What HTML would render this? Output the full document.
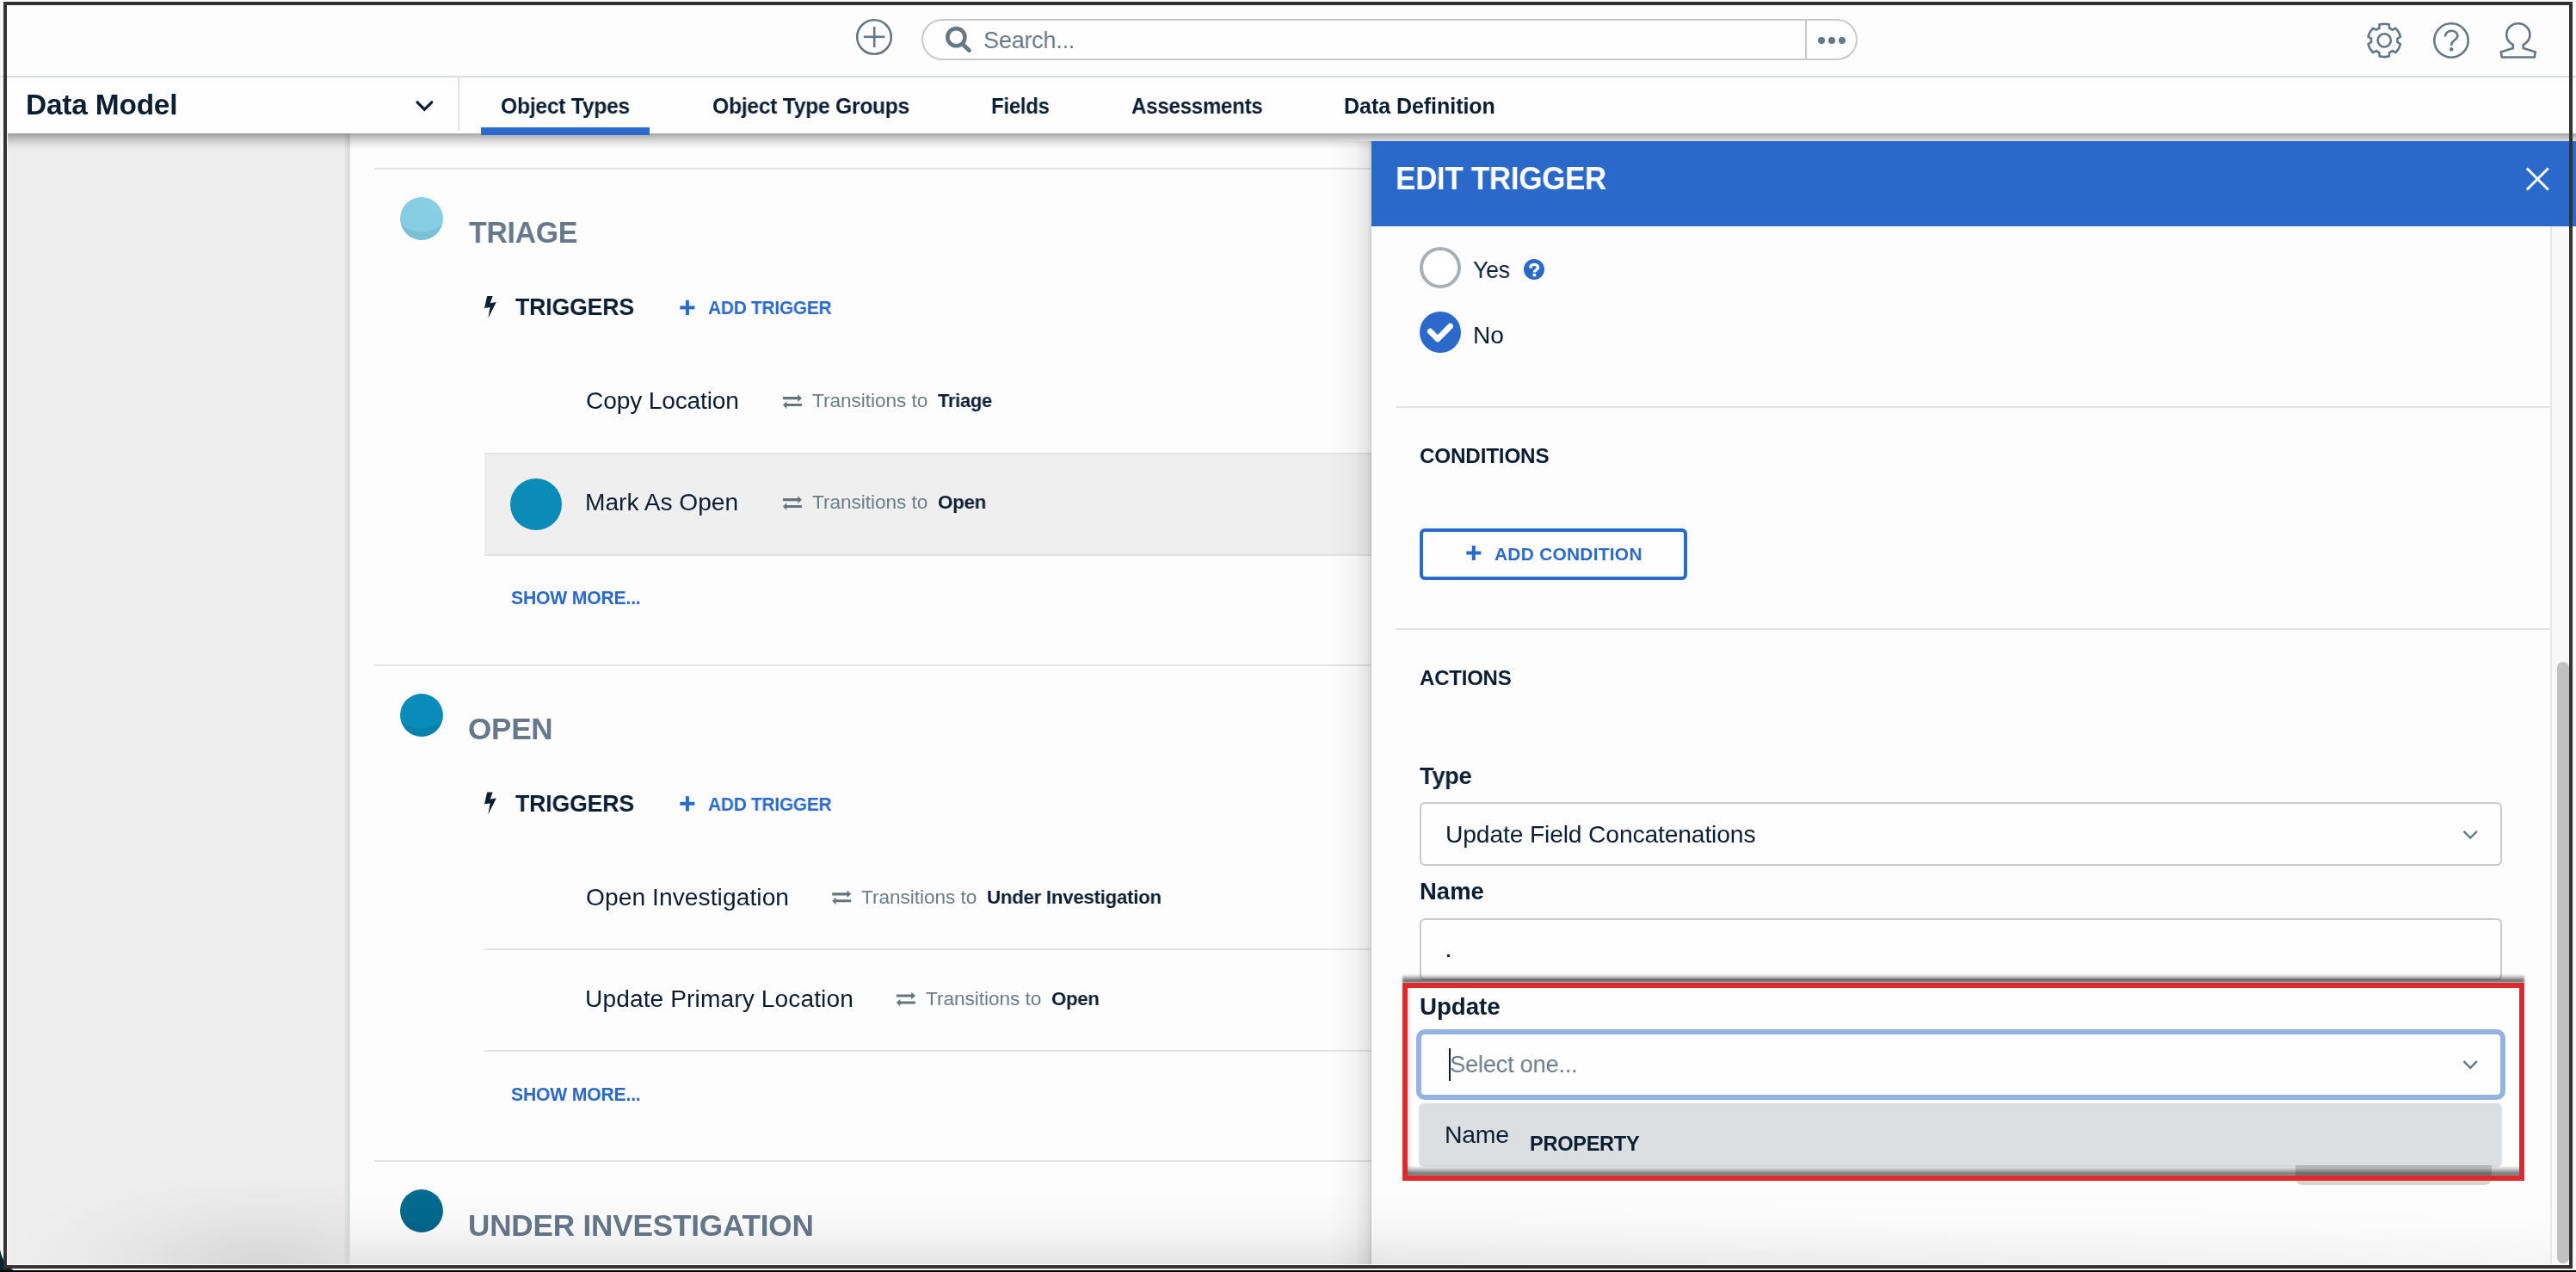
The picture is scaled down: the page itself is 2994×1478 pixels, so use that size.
<!DOCTYPE html>
<html><head><meta charset="utf-8">
<style>
html,body{margin:0;padding:0}
body{width:2994px;height:1478px;overflow:hidden;position:relative;background:#fdfdfd;font-family:"Liberation Sans",sans-serif}
.a{position:absolute;box-sizing:border-box}
.t{position:absolute;white-space:nowrap;line-height:1;font-family:"Liberation Sans",sans-serif;will-change:transform}
svg{position:absolute;overflow:visible}
</style></head>
<body>
<!-- top header -->
<div class="a" style="left:0;top:0;width:2994px;height:88px;background:#fdfdfd"></div>
<div class="a" style="left:0;top:88px;width:2994px;height:2px;background:#d7dde1"></div>
<!-- plus circle -->
<svg style="left:0;top:0" width="2994" height="90">
  <circle cx="1016" cy="43" r="19.8" fill="none" stroke="#667885" stroke-width="2.6"/>
  <line x1="1003.8" y1="42.8" x2="1028.4" y2="42.8" stroke="#667885" stroke-width="2.6"/>
  <line x1="1016.2" y1="31" x2="1016.2" y2="55" stroke="#667885" stroke-width="2.6"/>
</svg>
<!-- search box -->
<div class="a" style="left:1071px;top:22px;width:1088px;height:48px;border:2px solid #c9c9c9;border-radius:24px;background:#fefefe"></div>
<div class="a" style="left:2098px;top:22px;width:2px;height:48px;background:#c9c9c9"></div>
<svg style="left:0;top:0" width="2994" height="90">
  <circle cx="1111.4" cy="43.2" r="10.1" fill="none" stroke="#667885" stroke-width="4.6"/>
  <line x1="1119" y1="51.5" x2="1126.4" y2="58.6" stroke="#667885" stroke-width="4.8" stroke-linecap="round"/>
  <circle cx="2117" cy="47" r="4" fill="#667885"/>
  <circle cx="2129" cy="47" r="4" fill="#667885"/>
  <circle cx="2141" cy="47" r="4" fill="#667885"/>
</svg>
<!-- gear / help / user -->
<svg style="left:0;top:0" width="2994" height="90">
  <g transform="translate(2771.2,46.9)" fill="none" stroke="#667885" stroke-width="2.6" stroke-linejoin="miter">
    <path id="gear" d="M-5.86,-14.14 L-5.61,-18.36 A19.20,19.20 0 0 1 5.61,-18.36 L5.86,-14.14 A15.30,15.30 0 0 1 9.31,-12.14 L13.09,-14.04 A19.20,19.20 0 0 1 18.71,-4.32 L15.17,-2.00 A15.30,15.30 0 0 1 15.17,2.00 L18.71,4.32 A19.20,19.20 0 0 1 13.09,14.04 L9.31,12.14 A15.30,15.30 0 0 1 5.86,14.14 L5.61,18.36 A19.20,19.20 0 0 1 -5.61,18.36 L-5.86,14.14 A15.30,15.30 0 0 1 -9.31,12.14 L-13.09,14.04 A19.20,19.20 0 0 1 -18.71,4.32 L-15.17,2.00 A15.30,15.30 0 0 1 -15.17,-2.00 L-18.71,-4.32 A19.20,19.20 0 0 1 -13.09,-14.04 L-9.31,-12.14 A15.30,15.30 0 0 1 -5.86,-14.14 Z"/>
    <circle cx="0" cy="0" r="7.6"/>
  </g>
  <circle cx="2849" cy="47" r="19.7" fill="none" stroke="#667885" stroke-width="2.6"/>
  <path d="M2841.9,42.6 C2841.9,38.5 2845.2,35.8 2849.2,35.8 C2853.2,35.8 2856.4,38.5 2856.4,41.8 C2856.4,45.6 2850.4,46.8 2849.4,50.6 L2849.3,53" fill="none" stroke="#667885" stroke-width="2.6"/>
  <circle cx="2849.2" cy="57.3" r="2.2" fill="#667885"/>
  <path d="M2920.8,52 C2914.5,48.5 2913.2,43.5 2913.2,40.5 C2913.2,32.8 2919.5,27.3 2926.8,27.3 C2934.1,27.3 2940.4,32.8 2940.4,40.5 C2940.4,43.5 2939.1,48.5 2932.8,52 L2932.8,56 L2946.8,60.3 L2945.7,66.5 L2907.8,66.5 L2906.8,60.3 L2920.8,56 Z" fill="none" stroke="#667885" stroke-width="2.6" stroke-linejoin="miter"/>
</svg>

<!-- nav bar -->
<div class="a" style="left:0;top:90px;width:2994px;height:65px;background:#fefefe"></div>
<svg style="left:0;top:0" width="600" height="160">
  <polyline points="485,118.8 493.3,127.2 501.8,118.8" fill="none" stroke="#0c1f32" stroke-width="3.2" stroke-linecap="round"/>
</svg>
<div class="a" style="left:532px;top:90px;width:2px;height:62px;background:#dfe3e6"></div>

<!-- left panel -->
<div class="a" style="left:0;top:155px;width:405px;height:1323px;background:#eeeeee"></div>
<div class="a" style="left:399px;top:155px;width:6px;height:1323px;background:linear-gradient(to right,rgba(0,0,0,0),rgba(0,0,0,0.08))"></div>
<div class="a" style="left:405px;top:155px;width:2px;height:1323px;background:#d7dcdf"></div>
<!-- main content -->
<div class="a" style="left:407px;top:155px;width:1187px;height:1323px;background:#fdfdfd"></div>
<!-- nav shadow -->
<div class="a" style="left:0;top:155px;width:2994px;height:19px;background:linear-gradient(rgba(0,0,0,0.34),rgba(0,0,0,0.18) 35%,rgba(0,0,0,0.07) 65%,rgba(0,0,0,0.015) 92%,rgba(0,0,0,0))"></div>

<div class="a" style="left:559px;top:148px;width:196px;height:8.5px;background:#2b69ca"></div>
<!-- dividers main -->
<div class="a" style="left:435px;top:195px;width:1159px;height:2px;background:#e2e4e6"></div>
<div class="a" style="left:435px;top:772px;width:1159px;height:2px;background:#e2e4e6"></div>
<div class="a" style="left:435px;top:1348px;width:1159px;height:2px;background:#e2e4e6"></div>

<!-- status circles -->
<div class="a" style="left:465px;top:229px;width:50px;height:50px;border-radius:50%;background:radial-gradient(circle at 50% 10%,#87cee4 68%,#7cc0d5 70%)"></div>
<div class="a" style="left:465px;top:806px;width:50px;height:50px;border-radius:50%;background:radial-gradient(circle at 50% 10%,#0a8cba 68%,#0880ac 70%)"></div>
<div class="a" style="left:465px;top:1382px;width:50px;height:50px;border-radius:50%;background:radial-gradient(circle at 50% 10%,#036b8f 68%,#02648a 70%)"></div>

<!-- gray highlighted row -->
<div class="a" style="left:563px;top:526px;width:1031px;height:120px;background:#efefef;border-top:2px solid #e3e3e3;border-bottom:2px solid #e3e3e3"></div>
<div class="a" style="left:593px;top:556px;width:60px;height:60px;border-radius:50%;background:#0a8bb8"></div>
<!-- list separators open -->
<div class="a" style="left:563px;top:1102px;width:1031px;height:2px;background:#e3e3e3"></div>
<div class="a" style="left:563px;top:1220px;width:1031px;height:2px;background:#e3e3e3"></div>

<!-- icons main -->
<svg style="left:0;top:0" width="1600" height="1478">
  <g fill="#0c1f32">
    <path d="M566.2,344.1 L572.6,344.1 L569.8,352.2 L576.8,351.1 L567.4,369.8 L569.6,357 L563,357.9 Z"/>
    <path transform="translate(0,576.4)" d="M566.2,344.1 L572.6,344.1 L569.8,352.2 L576.8,351.1 L567.4,369.8 L569.6,357 L563,357.9 Z"/>
  </g>
  <g fill="#2b69ca">
    <rect x="796.9" y="348.8" width="4" height="17.2"/><rect x="790.3" y="355.4" width="17.2" height="4"/>
    <rect x="796.9" y="925.2" width="4" height="17.2"/><rect x="790.3" y="931.8" width="17.2" height="4"/>
  </g>
  <g fill="#65757f">
    <path transform="translate(0,0)" d="M909.9,461.1 L927.2,461.1 L927.2,458.3 L932,462.65 L927.2,466.9 L927.2,464.2 L909.9,464.2 Z M931.9,469.1 L914.3,469.1 L914.3,466.4 L909.9,470.55 L914.3,474.9 L914.3,472 L931.9,472 Z"/>
    <path transform="translate(0,118)" d="M909.9,461.1 L927.2,461.1 L927.2,458.3 L932,462.65 L927.2,466.9 L927.2,464.2 L909.9,464.2 Z M931.9,469.1 L914.3,469.1 L914.3,466.4 L909.9,470.55 L914.3,474.9 L914.3,472 L931.9,472 Z"/>
    <path transform="translate(57.3,576.2)" d="M909.9,461.1 L927.2,461.1 L927.2,458.3 L932,462.65 L927.2,466.9 L927.2,464.2 L909.9,464.2 Z M931.9,469.1 L914.3,469.1 L914.3,466.4 L909.9,470.55 L914.3,474.9 L914.3,472 L931.9,472 Z"/>
    <path transform="translate(132,694.4)" d="M909.9,461.1 L927.2,461.1 L927.2,458.3 L932,462.65 L927.2,466.9 L927.2,464.2 L909.9,464.2 Z M931.9,469.1 L914.3,469.1 L914.3,466.4 L909.9,470.55 L914.3,474.9 L914.3,472 L931.9,472 Z"/>
  </g>
</svg>

<!-- panel shadow -->
<div class="a" style="left:1544px;top:164px;width:50px;height:1314px;background:linear-gradient(to right,rgba(0,0,0,0),rgba(0,0,0,0.03) 60%,rgba(0,0,0,0.10) 92%,rgba(0,0,0,0.2))"></div>
<!-- panel -->
<div class="a" style="left:1594px;top:164px;width:1400px;height:99.6px;background:#2a69ca"></div>
<div class="a" style="left:1594px;top:263px;width:1400px;height:1215px;background:#fdfdfd"></div>
<svg style="left:0;top:0" width="2994" height="300">
  <line x1="2936.8" y1="195.5" x2="2961.8" y2="220.5" stroke="#fff" stroke-width="3"/>
  <line x1="2961.8" y1="195.5" x2="2936.8" y2="220.5" stroke="#fff" stroke-width="3"/>
</svg>
<!-- radios -->
<div class="a" style="left:1650px;top:287px;width:48px;height:48px;border-radius:50%;border:4px solid #a8b0b5;background:#fff"></div>
<div class="a" style="left:1650px;top:362px;width:48px;height:48px;border-radius:50%;background:#2b69ca"></div>
<svg style="left:0;top:0" width="2994" height="500">
  <polyline points="1662.3,385.2 1671,393.8 1685.6,379.2" fill="none" stroke="#fff" stroke-width="6.8" stroke-linejoin="round" stroke-linecap="round"/>
  <circle cx="1783" cy="313" r="12" fill="#2b69ca"/>
  <path d="M1778.9,311.4 C1778.9,308.6 1780.9,307.3 1783.3,307.3 C1785.8,307.3 1787.6,308.8 1787.6,310.8 C1787.6,313.1 1784.3,313.6 1783.4,315.6 L1783.4,316.4" fill="none" stroke="#fff" stroke-width="3.3"/>
  <rect x="1781.6" y="317.8" width="3.6" height="3.5" fill="#fff"/>
</svg>
<!-- dividers panel -->
<div class="a" style="left:1622px;top:472px;width:1342px;height:2px;background:#dfe3e6"></div>
<div class="a" style="left:1622px;top:730px;width:1342px;height:2px;background:#dfe3e6"></div>
<!-- add condition button -->
<div class="a" style="left:1650px;top:614px;width:311px;height:60px;border:4px solid #2b69ca;border-radius:6px;background:#fefefe"></div>
<svg style="left:0;top:0" width="2994" height="700">
  <rect x="1710.8" y="634" width="4" height="17" fill="#2b69ca"/><rect x="1704.3" y="640.5" width="17" height="4" fill="#2b69ca"/>
</svg>
<!-- type select -->
<div class="a" style="left:1650px;top:932px;width:1258px;height:74px;border:2px solid #c9c9c9;border-radius:6px;background:#fefefe"></div>
<!-- name input -->
<div class="a" style="left:1650px;top:1067px;width:1258px;height:72px;border:2px solid #c9c9c9;border-radius:6px;background:#fefefe"></div>
<div class="a" style="left:1681.5px;top:1108.6px;width:3.6px;height:3.6px;background:#0c1f32"></div>
<svg style="left:0;top:0" width="2994" height="1478">
  <polyline points="2863.5,965.8 2871.2,973.5 2878.9,965.8" fill="none" stroke="#667885" stroke-width="2.4"/>
</svg>

<!-- scrollbar -->
<div class="a" style="left:2964px;top:263px;width:2px;height:1215px;background:#e8e8e8"></div>
<div class="a" style="left:2966px;top:263px;width:28px;height:1215px;background:#f8f8f8"></div>
<div class="a" style="left:2972px;top:769px;width:14px;height:699px;border-radius:7px;background:#c1c1c1"></div>

<!-- highlight callout -->
<div class="a" style="left:1630px;top:1132px;width:1304px;height:10px;filter:blur(0.8px);background:linear-gradient(rgba(0,0,0,0),rgba(0,0,0,0.25) 35%,rgba(0,0,0,0.62) 80%,rgba(60,70,70,0.55))"></div>
<div class="a" style="left:1636px;top:1148px;width:1292px;height:217px;background:#fefefe"></div>
<div class="a" style="left:1646px;top:1196px;width:1266px;height:82px;border:6px solid #93b3e3;border-radius:10px;background:#fefefe"></div>
<div class="a" style="left:1684px;top:1218px;width:2px;height:38px;background:#0c1f32"></div>
<svg style="left:0;top:0" width="2994" height="1478">
  <polyline points="2863.5,1233.2 2871.2,1240.9 2878.9,1233.2" fill="none" stroke="#667885" stroke-width="2.4"/>
</svg>
<div class="a" style="left:2668px;top:1350px;width:228px;height:27px;border-radius:0 0 8px 8px;background:#d4d4d4"></div>
<div class="a" style="left:1650px;top:1282px;width:1257px;height:72px;border-radius:5px;background:#dcdfe2;box-shadow:0 1px 3px rgba(0,0,0,0.25)"></div>
<div class="a" style="left:1636px;top:1355px;width:1292px;height:11px;background:linear-gradient(rgba(0,0,0,0.03),rgba(0,0,0,0.2) 30%,rgba(0,0,0,0.5) 75%,rgba(0,0,0,0.45))"></div>
<div class="a" style="left:1636px;top:1148px;width:6px;height:217px;background:linear-gradient(to right,rgba(0,0,0,0.1),rgba(0,0,0,0))"></div>
<div class="a" style="left:1630px;top:1142px;width:1304px;height:230px;border:6px solid #e0292d"></div>

<div class="t" style="left:1142.91px;top:31.81px;font-size:28.45px;letter-spacing:-0.300px;font-weight:400;color:#667885;transform:scaleX(0.9538);transform-origin:0.89px 0">Search...</div>
<div class="t" style="left:30.31px;top:104.70px;font-size:33.43px;letter-spacing:-0.193px;font-weight:700;color:#0c1f32">Data Model</div>
<div class="t" style="left:582.02px;top:111.00px;font-size:25.04px;letter-spacing:-0.300px;font-weight:700;color:#0c1f32;transform:scaleX(0.9883);transform-origin:0.78px 0">Object Types</div>
<div class="t" style="left:827.72px;top:111.00px;font-size:25.04px;letter-spacing:-0.300px;font-weight:700;color:#0c1f32;transform:scaleX(0.9874);transform-origin:0.78px 0">Object Type Groups</div>
<div class="t" style="left:1152.34px;top:111.10px;font-size:25.04px;letter-spacing:-0.300px;font-weight:700;color:#0c1f32;transform:scaleX(0.9566);transform-origin:1.56px 0">Fields</div>
<div class="t" style="left:1314.91px;top:111.10px;font-size:25.04px;letter-spacing:-0.300px;font-weight:700;color:#0c1f32;transform:scaleX(0.9641);transform-origin:0.39px 0">Assessments</div>
<div class="t" style="left:1562.44px;top:111.10px;font-size:25.04px;letter-spacing:-0.055px;font-weight:700;color:#0c1f32">Data Definition</div>
<div class="t" style="left:545.20px;top:252.45px;font-size:35.14px;letter-spacing:-0.300px;font-weight:700;color:#66788a;transform:scaleX(0.9631);transform-origin:0.00px 0">TRIAGE</div>
<div class="t" style="left:599.10px;top:342.31px;font-size:28.45px;letter-spacing:-0.300px;font-weight:700;color:#0c1f32;transform:scaleX(0.9435);transform-origin:0.00px 0">TRIGGERS</div>
<div class="t" style="left:822.86px;top:348.21px;font-size:21.48px;letter-spacing:-0.300px;font-weight:700;color:#2b69ca;transform:scaleX(0.9754);transform-origin:0.34px 0">ADD TRIGGER</div>
<div class="t" style="left:681.08px;top:451.45px;font-size:28.17px;letter-spacing:-0.172px;font-weight:400;color:#0c1f32">Copy Location</div>
<div class="t" style="left:943.55px;top:455.15px;font-size:22.62px;letter-spacing:-0.042px;font-weight:400;color:#6b7c88">Transitions to</div>
<div class="t" style="left:1090.20px;top:455.15px;font-size:22.62px;letter-spacing:-0.300px;font-weight:700;color:#0c1f32;transform:scaleX(0.9711);transform-origin:0.00px 0">Triage</div>
<div class="t" style="left:680.20px;top:568.95px;font-size:28.17px;letter-spacing:-0.029px;font-weight:400;color:#0c1f32">Mark As Open</div>
<div class="t" style="left:943.55px;top:573.15px;font-size:22.62px;letter-spacing:-0.042px;font-weight:400;color:#6b7c88">Transitions to</div>
<div class="t" style="left:1090.09px;top:573.15px;font-size:22.62px;letter-spacing:-0.300px;font-weight:700;color:#0c1f32;transform:scaleX(0.9909);transform-origin:0.71px 0">Open</div>
<div class="t" style="left:593.57px;top:684.25px;font-size:21.19px;letter-spacing:-0.208px;font-weight:700;color:#2b69ca">SHOW MORE...</div>
<div class="t" style="left:544.30px;top:829.45px;font-size:35.14px;letter-spacing:-0.286px;font-weight:700;color:#66788a">OPEN</div>
<div class="t" style="left:599.10px;top:918.81px;font-size:28.45px;letter-spacing:-0.300px;font-weight:700;color:#0c1f32;transform:scaleX(0.9435);transform-origin:0.00px 0">TRIGGERS</div>
<div class="t" style="left:822.86px;top:924.71px;font-size:21.48px;letter-spacing:-0.300px;font-weight:700;color:#2b69ca;transform:scaleX(0.9754);transform-origin:0.34px 0">ADD TRIGGER</div>
<div class="t" style="left:681.08px;top:1027.75px;font-size:28.17px;letter-spacing:0.073px;font-weight:400;color:#0c1f32">Open Investigation</div>
<div class="t" style="left:1001.45px;top:1031.55px;font-size:22.62px;letter-spacing:-0.042px;font-weight:400;color:#6b7c88">Transitions to</div>
<div class="t" style="left:1146.84px;top:1031.55px;font-size:22.62px;letter-spacing:-0.300px;font-weight:700;color:#0c1f32;transform:scaleX(0.9879);transform-origin:1.06px 0">Under Investigation</div>
<div class="t" style="left:680.44px;top:1145.55px;font-size:28.17px;letter-spacing:0.090px;font-weight:400;color:#0c1f32">Update Primary Location</div>
<div class="t" style="left:1075.65px;top:1149.55px;font-size:22.62px;letter-spacing:-0.050px;font-weight:400;color:#6b7c88">Transitions to</div>
<div class="t" style="left:1222.09px;top:1149.55px;font-size:22.62px;letter-spacing:-0.300px;font-weight:700;color:#0c1f32;transform:scaleX(0.9836);transform-origin:0.71px 0">Open</div>
<div class="t" style="left:593.57px;top:1260.65px;font-size:21.19px;letter-spacing:-0.208px;font-weight:700;color:#2b69ca">SHOW MORE...</div>
<div class="t" style="left:544.35px;top:1405.95px;font-size:35.14px;letter-spacing:-0.190px;font-weight:700;color:#66788a">UNDER INVESTIGATION</div>
<div class="t" style="left:1622.31px;top:190.23px;font-size:36.70px;letter-spacing:-0.300px;font-weight:700;color:#ffffff;transform:scaleX(0.9517);transform-origin:2.29px 0">EDIT TRIGGER</div>
<div class="t" style="left:1711.86px;top:299.31px;font-size:28.45px;letter-spacing:-0.300px;font-weight:400;color:#0c1f32;transform:scaleX(0.9421);transform-origin:0.44px 0">Yes</div>
<div class="t" style="left:1712.40px;top:374.55px;font-size:28.17px;letter-spacing:-0.062px;font-weight:400;color:#0c1f32">No</div>
<div class="t" style="left:1650.04px;top:518.10px;font-size:24.32px;letter-spacing:-0.223px;font-weight:700;color:#0c1f32">CONDITIONS</div>
<div class="t" style="left:1736.97px;top:633.60px;font-size:20.91px;letter-spacing:0.256px;font-weight:700;color:#2b69ca">ADD CONDITION</div>
<div class="t" style="left:1650.02px;top:775.75px;font-size:24.04px;letter-spacing:-0.228px;font-weight:700;color:#0c1f32">ACTIONS</div>
<div class="t" style="left:1650.40px;top:887.69px;font-size:27.88px;letter-spacing:-0.300px;font-weight:700;color:#0c1f32;transform:scaleX(0.9787);transform-origin:0.00px 0">Type</div>
<div class="t" style="left:1679.73px;top:954.63px;font-size:28.31px;letter-spacing:-0.170px;font-weight:400;color:#0c1f32">Update Field Concatenations</div>
<div class="t" style="left:1649.98px;top:1021.75px;font-size:27.45px;letter-spacing:0.042px;font-weight:700;color:#0c1f32">Name</div>
<div class="t" style="left:1650.40px;top:1155.61px;font-size:27.74px;letter-spacing:-0.064px;font-weight:700;color:#0c1f32">Update</div>
<div class="t" style="left:1685.03px;top:1222.69px;font-size:27.88px;letter-spacing:-0.300px;font-weight:400;color:#6b7c88;transform:scaleX(0.9824);transform-origin:0.87px 0">Select one...</div>
<div class="t" style="left:1679.28px;top:1303.51px;font-size:28.45px;letter-spacing:-0.271px;font-weight:400;color:#0c1f32">Name</div>
<div class="t" style="left:1778.22px;top:1318.01px;font-size:23.61px;letter-spacing:-0.309px;font-weight:700;color:#0c1f32">PROPERTY</div>

<!-- bottom vignette -->
<div class="a" style="left:407px;top:1385px;width:2557px;height:91px;background:linear-gradient(rgba(0,0,0,0),rgba(0,0,0,0.025) 45%,rgba(0,0,0,0.09) 92%,rgba(0,0,0,0.09));-webkit-mask-image:linear-gradient(to right,#000 0%,#000 45%,rgba(0,0,0,0.3) 100%)"></div>
<div class="a" style="left:8px;top:1340px;width:397px;height:130px;background:radial-gradient(ellipse 300px 110px at 75% 100%,rgba(0,0,0,0.1),rgba(0,0,0,0.03) 55%,rgba(0,0,0,0) 100%)"></div>
<!-- frame -->
<div class="a" style="left:0;top:0;width:2994px;height:2px;background:#fdfdfd"></div>
<div class="a" style="left:0;top:0;width:4px;height:1478px;background:#f8f8f8"></div>
<div class="a" style="left:0;top:88px;width:4px;height:2px;background:#dde2e5"></div>
<div class="a" style="left:0;top:2px;width:4px;height:1px;background:#e6e6e6"></div>
<div class="a" style="left:0;top:1474px;width:2994px;height:2px;background:#f2f2f2"></div>
<div class="a" style="left:0;top:1476px;width:2994px;height:2px;background:#000"></div>
<div class="a" style="left:8px;top:155px;width:1px;height:1315px;background:#fbfbfb"></div>
<div class="a" style="left:8px;top:1469px;width:2978px;height:1px;background:#fbfbfb"></div>
<svg style="left:0;top:0" width="60" height="1478"><path d="M0,1452 C2.5,1462 5,1470 16,1476 L0,1476 Z" fill="#0b2232"/></svg>
<div class="a" style="left:4px;top:2px;width:2986px;height:1472px;border:4px solid #333333"></div>
</body></html>
